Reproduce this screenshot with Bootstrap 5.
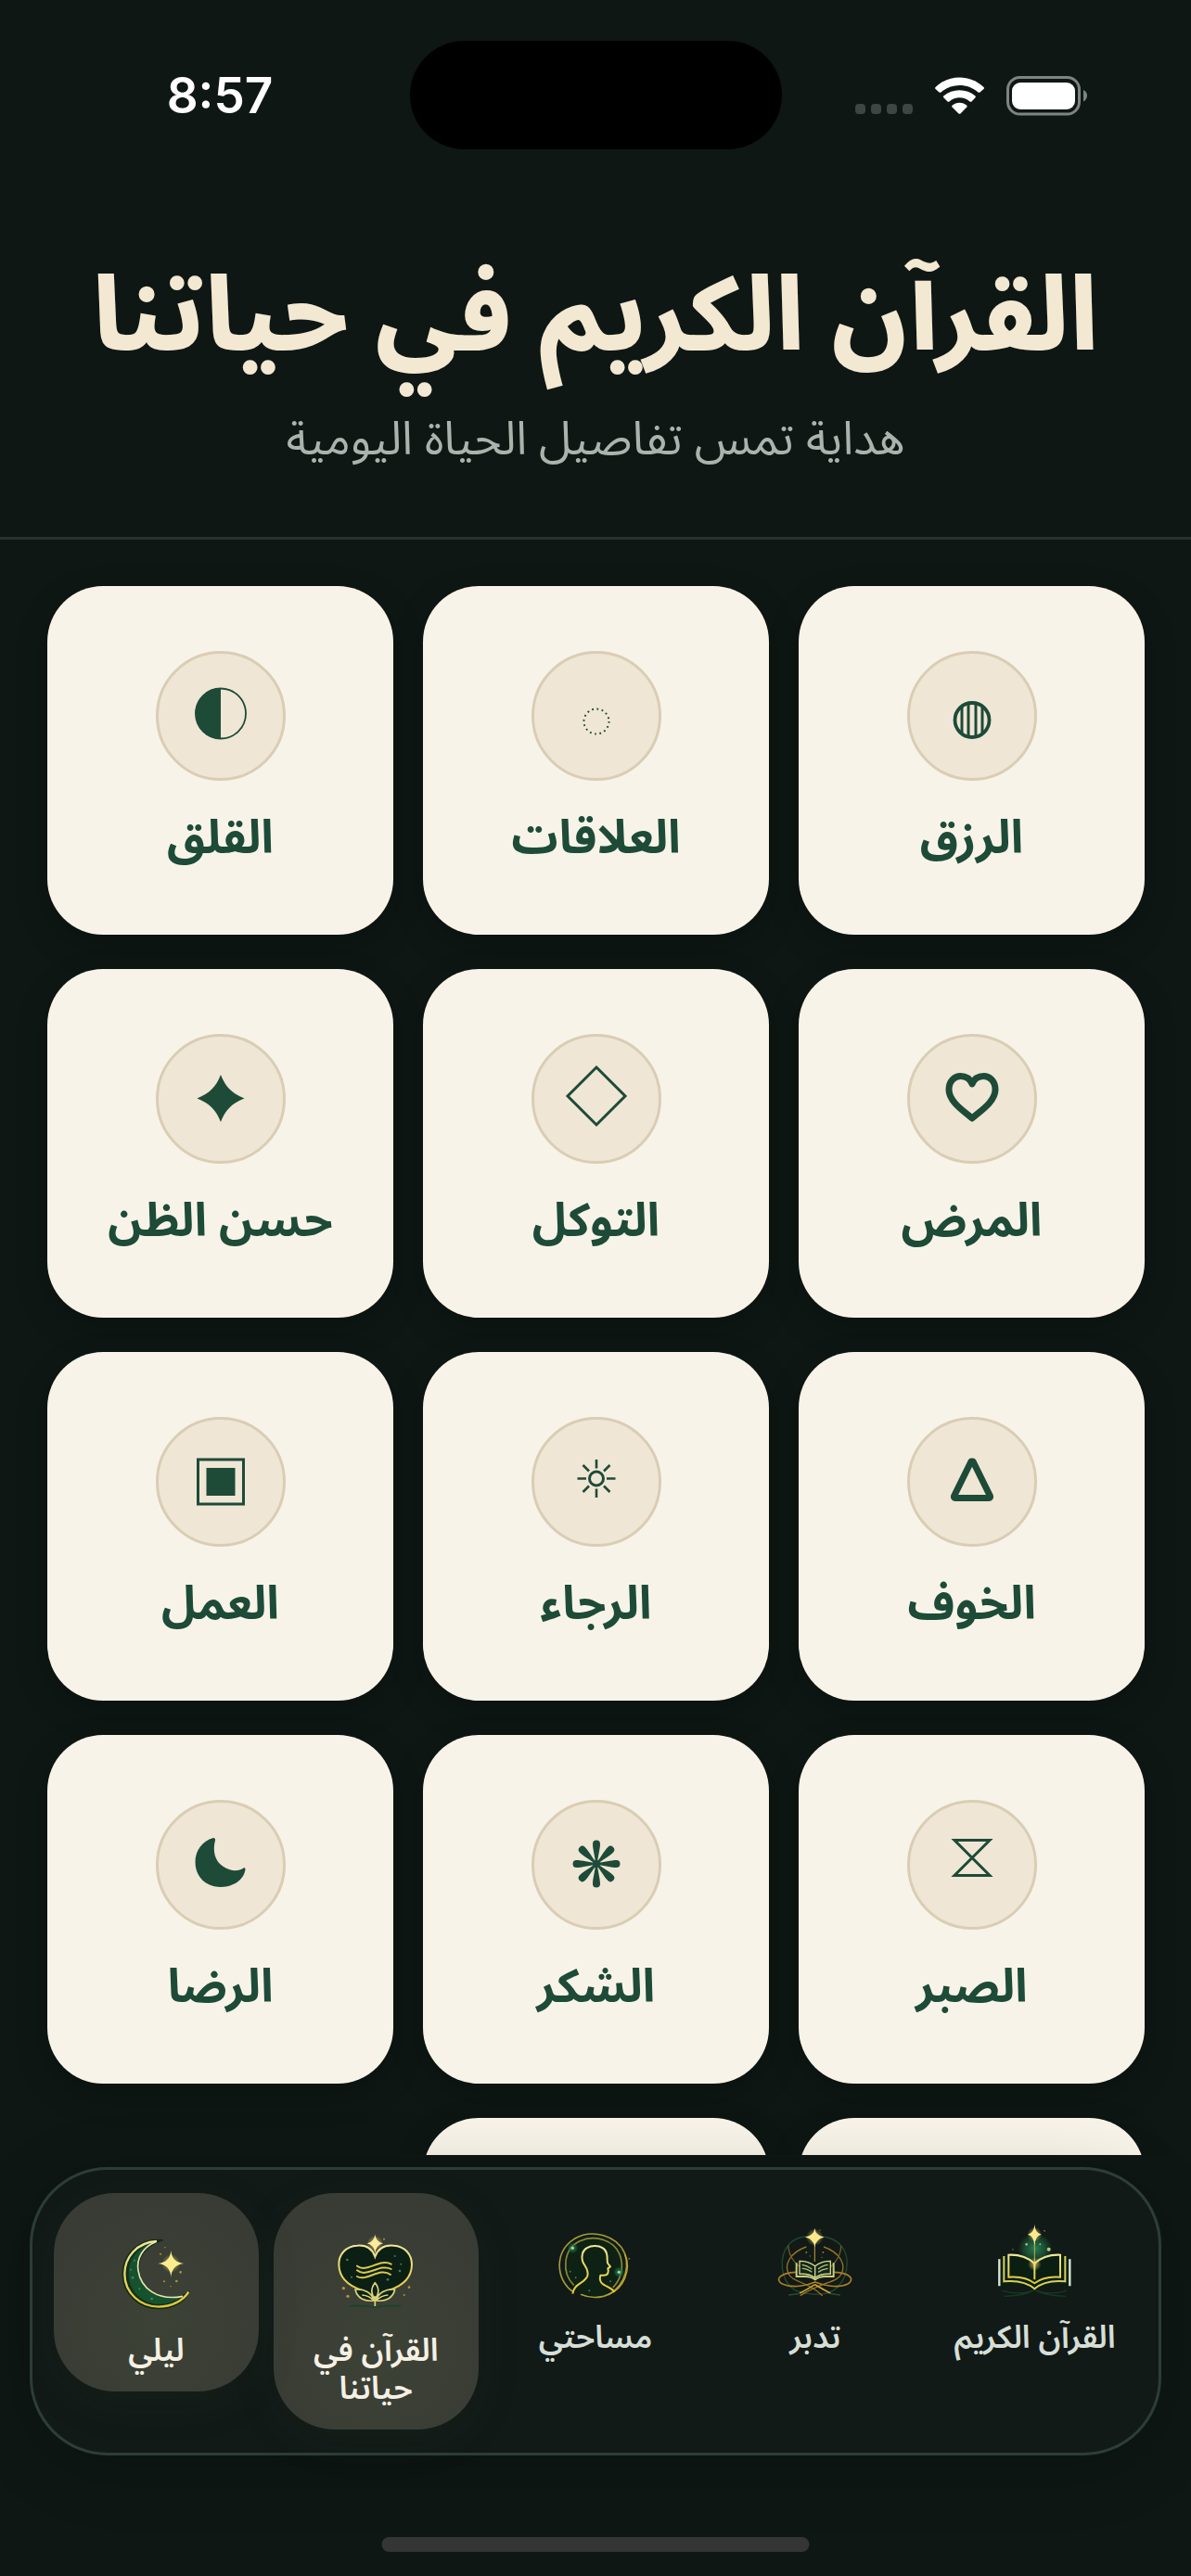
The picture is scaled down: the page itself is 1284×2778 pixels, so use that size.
<!DOCTYPE html>
<html lang="ar" dir="rtl">
<head>
<meta charset="utf-8">
<meta name="viewport" content="width=device-width, initial-scale=1">
<title>القرآن الكريم في حياتنا</title>
<link rel="stylesheet" href="https://cdn.jsdelivr.net/npm/bootstrap@5.3.0/dist/css/bootstrap.min.css">
<style>
  :root { --night: #0e1714; --leaf: #1d4b38; --gold: #d8c94e; }
  body { background: var(--night); font-family: "Noto Sans Arabic", "Noto Sans", sans-serif; color: #f3e8d2; }
  .status-bar { height: 177px; padding: 44px 112px 0; font-family: Inter, "Liberation Sans", sans-serif; }
  .status-time { width: 272px; padding-right: 22px; font-size: 53px; font-weight: 600; line-height: 118px; color: #fff; text-align: center; }
  .island { width: 401px; height: 117px; background: #000; }
  .status-icons { width: 272px; height: 117px; }
  .page-head { padding: 105px 48px 73px; border-bottom: 3px solid #26332f; }
  .page-title { font-size: 110px; line-height: 120px; font-weight: 800; color: #f3e8d2; margin-bottom: 40px; }
  .page-sub { font-size: 50px; line-height: 64px; color: #a9b4ad; }
  .topics { padding: 50px 50px 0 51px; }
  .topic-grid { --bs-gutter-x: 32px; --bs-gutter-y: 37px; }
  .topic { padding: 70px 0; border-radius: 60px; background: #f8f3e8; color: var(--leaf); border: 0; box-shadow: 0 12px 36px rgba(0, 0, 0, .18); }
  .topic-icon { width: 140px; height: 140px; background: #f0e6d5; border: 3px solid #d9cdb4; }
  .topic-name { margin-top: 28px; font-size: 50px; line-height: 68px; font-weight: 700; }
  .tab-dock { margin: 13px 32px 130px; padding: 25px 23px; gap: 16px; border: 3px solid #2d3d38; border-radius: 84px; background: #111a17; box-shadow: 0 12px 72px rgba(0, 0, 0, .18); }
  .tab-item { flex: 1 1 0; padding: 21px 8px 23px; border-radius: 66px; color: #d6ded6; font-size: 34px; line-height: 41px; font-weight: 600; }
  .tab-item svg { margin-bottom: 15px; }
  .tab-item.active { padding-top: 35px; background: radial-gradient(circle at 50% 65%, #3d4236, #383c35 75%); color: #f5f0e4; box-shadow: 0 12px 48px rgba(60, 70, 50, .1); }
  .home-bar { bottom: 26px; width: 461px; height: 16px; background: #333635; }
</style>
</head>
<body>
<svg width="0" height="0" class="position-absolute" aria-hidden="true">
  <defs>
    <linearGradient id="goldLine" x1="0" y1="0" x2="0" y2="1"><stop offset="0" stop-color="#efe79a"/><stop offset="1" stop-color="#e3c62f"/></linearGradient>
    <radialGradient id="greenGlow"><stop offset="0" stop-color="#2f8a56" stop-opacity=".9"/><stop offset=".6" stop-color="#1f6a43" stop-opacity=".6"/><stop offset="1" stop-color="#1f6a43" stop-opacity="0"/></radialGradient>
    <radialGradient id="goldGlow"><stop offset="0" stop-color="#ffe97a" stop-opacity=".7"/><stop offset="1" stop-color="#ffe97a" stop-opacity="0"/></radialGradient>
  </defs>
</svg>
<div class="d-flex flex-column vh-100 overflow-hidden position-relative">
  <div class="status-bar d-flex justify-content-between flex-shrink-0" dir="ltr">
    <div class="status-time">8:57</div>
    <div class="island rounded-pill"></div>
    <svg class="status-icons" viewBox="900 44 272 117" role="img" aria-label="Wi-Fi, battery">
      <g fill="#3e4644"><rect x="922" y="112" width="11" height="11" rx="4"/><rect x="939" y="112" width="11" height="11" rx="4"/><rect x="956" y="112" width="11" height="11" rx="4"/><rect x="973" y="112" width="11" height="11" rx="4"/></g>
      <g fill="#fff"><path d="M1008.600 94Q1007.500 95 1008.600 96L1012.500 99.500Q1013.500 100.200 1014.500 99.400C1026 89.500 1043 89.500 1054.500 99.400Q1055.500 100.200 1056.500 99.500L1060.500 96Q1061.500 95 1060.500 94C1046 80 1023 80 1008.600 94Z"/><path d="M1017.300 103.500Q1016.500 104.500 1017.300 105.300L1021.500 109.400Q1022.500 110.200 1023.500 109.400C1030 104 1039 104 1045.500 109.400Q1046.500 110.200 1047.500 109.400L1051.500 105.300Q1052.300 104.500 1051.500 103.500C1042 95 1027 95 1017.300 103.500Z"/><path d="M1026.500 113.800C1031 109.800 1038 109.800 1042.300 113.800Q1043 114.600 1042.300 115.400L1035.500 122.400Q1034.500 123.200 1033.500 122.400L1026.500 115.400Q1025.800 114.600 1026.500 113.800Z"/>
      <rect x="1091" y="89" width="68" height="29" rx="9"/></g>
      <rect x="1086.500" y="83.500" width="77" height="39.500" rx="13" fill="none" stroke="#7e8482" stroke-width="3"/><path d="M1168 97Q1172 99 1172 103T1168 109.500Z" fill="#7e8482"/>
    </svg>
  </div>

  <header class="page-head text-center flex-shrink-0">
    <h1 class="page-title text-nowrap">القرآن الكريم في حياتنا</h1>
    <p class="page-sub mb-0">هداية تمس تفاصيل الحياة اليومية</p>
  </header>

  <main class="topics flex-fill overflow-hidden">
    <div class="topic-grid row row-cols-3">
      <div class="col"><button type="button" class="topic w-100 d-flex flex-column align-items-center">
        <span class="topic-icon rounded-circle"><svg viewBox="-67 -67 134 134" fill="none" stroke="currentColor" aria-hidden="true"><circle cy="4.500" r="18.500" stroke-width="3.800"/><path stroke-width="3" d="M-11-9V18M-4-12V21M4-12V21M11-9V18"/></svg></span>
        <span class="topic-name">الرزق</span></button></div>
      <div class="col"><button type="button" class="topic w-100 d-flex flex-column align-items-center">
        <span class="topic-icon rounded-circle"><svg viewBox="-67 -67 134 134" fill="none" stroke="currentColor" aria-hidden="true"><circle cy="6" r="13.500" stroke-width="2" stroke-dasharray="1.800 3.502"/></svg></span>
        <span class="topic-name">العلاقات</span></button></div>
      <div class="col"><button type="button" class="topic w-100 d-flex flex-column align-items-center">
        <span class="topic-icon rounded-circle"><svg viewBox="-67 -67 134 134" fill="none" stroke="currentColor" aria-hidden="true"><circle cy="-2.500" r="27" stroke-width="1.800"/><path fill="currentColor" stroke="none" d="M0-30A27.500 27.500 0 0 0 0 25Z"/></svg></span>
        <span class="topic-name">القلق</span></button></div>

      <div class="col"><button type="button" class="topic w-100 d-flex flex-column align-items-center">
        <span class="topic-icon rounded-circle"><svg viewBox="-67 -67 134 134" fill="none" stroke="currentColor" aria-hidden="true"><path stroke-width="7" stroke-linejoin="round" d="M0 21C-9 13-25 3-25-10C-25-19-19-24.500-12.500-24.500C-6-24.500-2-21 0-16C2-21 6-24.500 12.500-24.500C19-24.500 25-19 25-10C25 3 9 13 0 21Z"/></svg></span>
        <span class="topic-name">المرض</span></button></div>
      <div class="col"><button type="button" class="topic w-100 d-flex flex-column align-items-center">
        <span class="topic-icon rounded-circle"><svg viewBox="-67 -67 134 134" fill="none" stroke="currentColor" aria-hidden="true"><path stroke-width="3" d="M0-34L31-3L0 28L-31-3Z"/></svg></span>
        <span class="topic-name">التوكل</span></button></div>
      <div class="col"><button type="button" class="topic w-100 d-flex flex-column align-items-center">
        <span class="topic-icon rounded-circle"><svg viewBox="-67 -67 134 134" fill="currentColor" aria-hidden="true"><path d="M0-26C5-13 12-6 25.500-.500C12 5 5 12 0 25C-5 12-12 5-25.500-.500C-12-6-5-13 0-26Z"/></svg></span>
        <span class="topic-name">حسن الظن</span></button></div>

      <div class="col"><button type="button" class="topic w-100 d-flex flex-column align-items-center">
        <span class="topic-icon rounded-circle"><svg viewBox="-67 -67 134 134" fill="none" stroke="currentColor" aria-hidden="true"><path stroke-width="7" stroke-linejoin="round" d="M-1-22H1L19.500 15.500Q20 17.500 18 17.500H-18Q-20 17.500-19.500 15.500Z"/></svg></span>
        <span class="topic-name">الخوف</span></button></div>
      <div class="col"><button type="button" class="topic w-100 d-flex flex-column align-items-center">
        <span class="topic-icon rounded-circle"><svg viewBox="-67 -67 134 134" fill="none" stroke="currentColor" aria-hidden="true"><g transform="translate(0 -3.500)" stroke-width="2.600"><circle r="7.500" stroke-width="3"/><path d="M0-20.500V-11M0 20.500V11M-20.500 0H-11M20.500 0H11M-14.500-14.500L-8-8M14.500-14.500L8-8M-14.500 14.500L-8 8M14.500 14.500L8 8"/></g></svg></span>
        <span class="topic-name">الرجاء</span></button></div>
      <div class="col"><button type="button" class="topic w-100 d-flex flex-column align-items-center">
        <span class="topic-icon rounded-circle"><svg viewBox="-67 -67 134 134" fill="none" stroke="currentColor" aria-hidden="true"><rect x="-24.500" y="-24" width="49" height="48" stroke-width="3"/><rect x="-15.500" y="-15" width="31" height="30" fill="currentColor" stroke="none"/></svg></span>
        <span class="topic-name">العمل</span></button></div>

      <div class="col"><button type="button" class="topic w-100 d-flex flex-column align-items-center">
        <span class="topic-icon rounded-circle"><svg viewBox="-67 -67 134 134" fill="none" stroke="currentColor" aria-hidden="true"><path stroke-width="3" d="M-19-26.500H19L-19 11.500H19Z"/></svg></span>
        <span class="topic-name">الصبر</span></button></div>
      <div class="col"><button type="button" class="topic w-100 d-flex flex-column align-items-center">
        <span class="topic-icon rounded-circle"><svg viewBox="-67 -67 134 134" fill="currentColor" aria-hidden="true"><defs><path id="petal" d="M-.900 0C-1.500-8-4-16-4-21.500A4 4 0 0 1 4-21.500C4-16 1.500-8 .900 0Z"/></defs><g transform="translate(0 -1)"><use href="#petal"/><use href="#petal" transform="rotate(45)"/><use href="#petal" transform="rotate(90)"/><use href="#petal" transform="rotate(135)"/><use href="#petal" transform="rotate(180)"/><use href="#petal" transform="rotate(225)"/><use href="#petal" transform="rotate(270)"/><use href="#petal" transform="rotate(315)"/><circle r="4"/></g></svg></span>
        <span class="topic-name">الشكر</span></button></div>
      <div class="col"><button type="button" class="topic w-100 d-flex flex-column align-items-center">
        <span class="topic-icon rounded-circle"><svg viewBox="-67 -67 134 134" fill="currentColor" aria-hidden="true"><path d="M-8-29C-20-26-27.500-15-27.500-3C-27.500 13-16 24 0 24C14 24 25 16 26.500 5C26.500 3.500 25.500 3 24.500 3.500C20 6.500 15 7 9 5C-4 1-10-11-6-26.500C-5.800-28-6.800-29.300-8-29Z"/></svg></span>
        <span class="topic-name">الرضا</span></button></div>

      <div class="col"><button type="button" class="topic w-100 d-flex flex-column align-items-center" aria-label="موضوع">
        <span class="topic-icon rounded-circle"></span></button></div>
      <div class="col"><button type="button" class="topic w-100 d-flex flex-column align-items-center" aria-label="موضوع">
        <span class="topic-icon rounded-circle"></span></button></div>
    </div>
  </main>

  <nav class="tab-dock d-flex align-items-start flex-shrink-0 position-relative">
    <a href="#" class="tab-item text-decoration-none text-center text-nowrap">
      <svg width="100" height="100" viewBox="56 15 300 300" fill="none" aria-hidden="true">
        <ellipse cx="206" cy="132" rx="56" ry="50" fill="url(#greenGlow)"/>
        <path d="M100 268Q160 285 204 265Q250 285 308 268M104 286Q170 285 204 265Q240 285 305 286" stroke="#173a24" stroke-width="4"/>
        <path d="M84 168V258Q160 236 204 268Q250 236 324 258V168Q260 140 204 176Q150 140 84 168Z" fill="#0a1f12"/>
        <path d="M90 166V253M318 166V253" stroke="#dfe6d8" stroke-width="7"/>
        <path d="M105 156V238Q170 232 204 262Q238 232 303 238V156" stroke="#d9cf5e" stroke-width="6"/>
        <path d="M204 180Q172 150 120 152V224Q174 220 204 244Q234 220 287 224V152Q236 150 204 180ZM204 180V232" stroke="url(#goldLine)" stroke-width="6"/>
        <path d="M204 100V176" stroke="#b9ae55" stroke-width="3"/>
        <circle cx="204" cy="182" r="22" fill="url(#goldGlow)"/><circle cx="204" cy="86" r="24" fill="url(#goldGlow)"/>
        <path d="M204 54Q206 82 226 86Q206 90 204 122Q202 90 182 86Q202 82 204 54Z" fill="#fdea8c"/>
        <circle cx="250" cy="134" r="6" fill="#b9cc6c"/><circle cx="178" cy="118" r="4" fill="#9fc06a"/><circle cx="236" cy="74" r="3" fill="#6a6a30"/><circle cx="222" cy="118" r="3" fill="#79c08c"/><circle cx="134" cy="134" r="3" fill="#3b5a3a"/>
      </svg>
      <span class="d-block">القرآن الكريم</span></a>
    <a href="#" class="tab-item text-decoration-none text-center">
      <svg width="100" height="100" viewBox="33 15 300 300" fill="none" aria-hidden="true">
        <path d="M110 262C70 230 64 160 96 120C120 92 150 92 180 92C215 92 244 96 268 124C298 162 290 236 240 268C220 284 140 284 110 262Z" stroke="#234a30" stroke-width="4"/>
        <g stroke="#9a7426" stroke-width="4"><path d="M154 126C100 145 80 185 98 216C112 242 160 238 206 284"/><path d="M210 126C264 145 284 185 266 216C252 242 206 238 134 284" /><path d="M96 122C96 165 130 190 150 206M266 122C266 165 236 190 214 206" stroke="#6b5a26"/></g>
        <path d="M120 208C70 210 50 232 76 246C110 262 160 250 182 240C206 250 256 262 288 246C312 232 296 210 244 208" stroke="#a87f2a" stroke-width="5"/>
        <path d="M182 248Q150 268 132 276M182 248Q216 268 232 276" stroke="#d0a43a" stroke-width="5"/><path d="M96 282L130 278M232 278L264 282" stroke="#234a30" stroke-width="5"/>
        <path d="M122 178V222H150Q170 222 182 232Q196 222 214 222H242V178" stroke="#c9cf7e" stroke-width="6"/>
        <path d="M182 188Q160 172 132 172V214Q164 212 182 226Q200 212 232 214V172Q204 172 182 188ZM182 188V226" fill="#10271a" stroke="#d9d88a" stroke-width="4"/>
        <path d="M140 184Q156 186 172 198M140 196Q156 196 172 208M192 198Q206 186 224 184M192 208Q206 198 224 196" stroke="#b9bd74" stroke-width="4"/>
        <path d="M181 112V174" stroke="#c79f3e" stroke-width="3"/>
        <circle cx="181" cy="95" r="28" fill="url(#goldGlow)"/>
        <path d="M181 66Q184 90 212 95Q184 100 181 128Q178 100 150 95Q178 90 181 66Z" fill="#ffe88c"/>
        <g fill="#8b7430"><circle cx="154" cy="144" r="3"/><circle cx="208" cy="144" r="3"/><circle cx="166" cy="156" r="2"/><circle cx="204" cy="160" r="2"/><circle cx="198" cy="72" r="2"/></g>
      </svg>
      <span class="d-block">تدبر</span></a>
    <a href="#" class="tab-item text-decoration-none text-center">
      <svg width="100" height="100" viewBox="40 15 300 300" fill="none" aria-hidden="true">
        <circle cx="186" cy="186" r="98" fill="#0d2114"/>
        <path d="M118 272C60 232 56 142 122 100C180 66 260 90 284 146C306 206 270 272 216 286C190 292 160 288 142 280" stroke="#a59a3c" stroke-width="5"/>
        <path d="M120 250C80 212 84 134 138 108C190 84 250 106 268 150C284 192 272 232 246 258" stroke="#8b8738" stroke-width="5"/>
        <path d="M286 150C306 200 282 262 232 280" stroke="#c9a62e" stroke-width="4"/>
        <path d="M116 278C120 244 154 246 164 220C172 190 138 184 148 148C156 116 220 114 226 148C230 162 226 172 230 180L238 190L230 196C234 208 230 218 218 218H206C196 252 234 250 252 272" stroke="url(#goldLine)" stroke-width="6" stroke-linejoin="round"/>
        <circle cx="116" cy="130" r="18" fill="url(#greenGlow)"/><circle cx="116" cy="130" r="5" fill="#a8dca0"/><circle cx="266" cy="208" r="18" fill="url(#greenGlow)"/><circle cx="266" cy="208" r="5" fill="#8fdcae"/>
        <g fill="#3f7a50"><circle cx="108" cy="206" r="3"/><circle cx="126" cy="226" r="3"/><circle cx="170" cy="268" r="3"/><circle cx="238" cy="238" r="3"/></g><circle cx="299" cy="164" r="3" fill="#7a6c2a"/>
      </svg>
      <span class="d-block">مساحتي</span></a>
    <a href="#" class="tab-item active text-decoration-none text-center" aria-current="page">
      <svg width="100" height="100" viewBox="106 57 300 300" fill="none" aria-hidden="true">
        <path d="M172 318Q215 314 254 322Q296 314 338 318" stroke="#1d4428" stroke-width="6"/>
        <path d="M254 158C244 128 220 120 196 122C160 124 136 150 137 184C138 226 168 252 210 266L254 292L300 266C344 252 372 226 373 184C373 150 350 124 314 122C288 120 264 130 254 158Z" fill="#0b1f14" stroke="url(#goldLine)" stroke-width="6"/>
        <path d="M196 188C226 212 270 162 306 182M196 202C226 228 270 178 306 198M196 222C226 240 270 190 304 216" stroke="#d9c94e" stroke-width="6" stroke-linecap="round"/>
        <path d="M190 264C220 262 244 274 250 300C220 304 196 292 190 264ZM318 264C288 262 264 274 258 300C288 304 312 292 318 264ZM254 242C238 262 242 282 254 294C266 282 270 262 254 242ZM254 286V318M212 282Q236 284 250 300M296 282Q272 284 258 300" fill="#10241a" stroke="#ddd27c" stroke-width="5" stroke-linejoin="round"/>
        <circle cx="254" cy="115" r="26" fill="url(#goldGlow)"/>
        <path d="M254 86Q257 110 280 115Q257 120 254 148Q251 120 228 115Q251 110 254 86Z" fill="#fdea9c"/>
        <g fill="#b88f38"><circle cx="152" cy="260" r="5"/><circle cx="166" cy="286" r="5"/><circle cx="364" cy="257" r="4"/><circle cx="348" cy="282" r="3"/><circle cx="283" cy="101" r="3"/></g>
        <g fill="#4c7a50"><circle cx="164" cy="168" r="4"/><circle cx="178" cy="224" r="3"/><circle cx="334" cy="204" r="4"/><circle cx="338" cy="182" r="3"/><circle cx="295" cy="232" r="4"/><circle cx="318" cy="156" r="3"/></g>
      </svg>
      <span class="d-block px-3">القرآن في حياتنا</span></a>
    <a href="#" class="tab-item active text-decoration-none text-center">
      <svg width="100" height="100" viewBox="265 117 300 300" fill="none" aria-hidden="true">
        <path d="M438 164C360 156 308 210 308 274C308 342 364 386 424 386C474 386 510 362 524 330C500 350 470 356 440 350C390 340 358 300 360 248C362 208 386 182 438 164Z" fill="#14311f" stroke="#12291a" stroke-width="4"/>
        <path d="M418 168C372 186 352 220 358 262C366 320 420 362 500 346C460 378 400 382 358 346C310 300 310 196 418 168Z" fill="#17522f"/>
        <path d="M418 168C352 172 314 220 314 274C314 336 366 380 424 380C466 380 504 360 521 332" stroke="url(#goldLine)" stroke-width="7"/>
        <path d="M414 170C372 188 352 224 358 262C366 320 420 362 502 346" stroke="#e9e7ac" stroke-width="5"/>
        <circle cx="464" cy="240" r="30" fill="url(#goldGlow)"/>
        <path d="M464 198Q467 236 506 240Q467 244 464 284Q461 244 422 240Q461 236 464 198Z" fill="#ffec8c"/>
        <g fill="#b98f30"><circle cx="495" cy="268" r="4"/><circle cx="482" cy="297" r="4"/><circle cx="442" cy="298" r="3"/><circle cx="430" cy="209" r="3"/><circle cx="445" cy="188" r="2"/><circle cx="463" cy="314" r="2"/></g>
        <g fill="#3f8a58"><circle cx="340" cy="286" r="4"/><circle cx="334" cy="260" r="3"/><circle cx="362" cy="322" r="3"/><circle cx="402" cy="354" r="4"/><circle cx="346" cy="230" r="3"/></g>
      </svg>
      <span class="d-block">ليلي</span></a>
  </nav>

  <div class="home-bar rounded-pill position-absolute start-50 translate-middle-x"></div>
</div>
<script src="https://cdn.jsdelivr.net/npm/bootstrap@5.3.0/dist/js/bootstrap.bundle.min.js"></script>
</body>
</html>
